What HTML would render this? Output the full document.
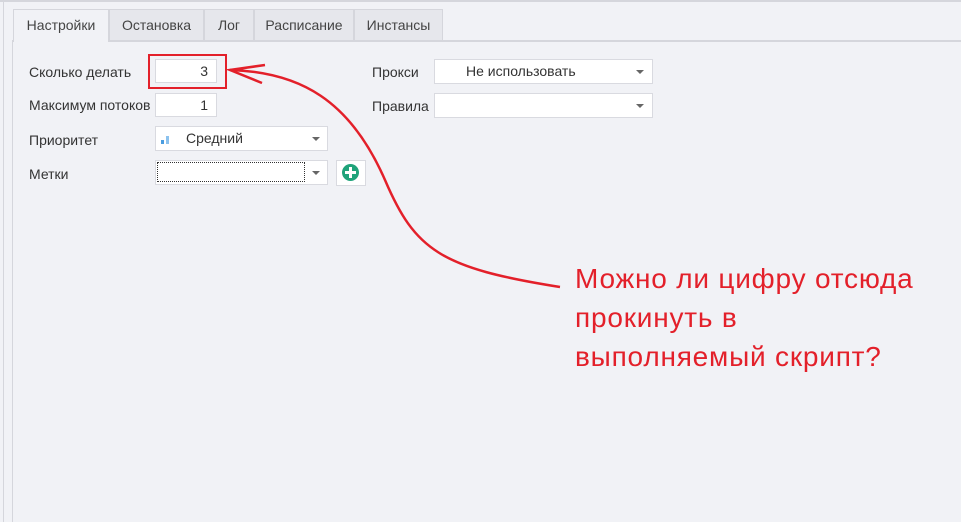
<!DOCTYPE html>
<html><head><meta charset="utf-8"><style>
body{margin:0;width:961px;height:522px;background:#f1f2f6;position:relative;overflow:hidden;font-family:"Liberation Sans",sans-serif;font-size:14px;color:#333}
.a{position:absolute}
.tab{position:absolute;top:9px;height:31px;line-height:31px;text-align:center;background:#e6e7ec;border:1px solid #d5d6dc;border-bottom:none;box-sizing:border-box;color:#444}
.in{position:absolute;background:#fff;border:1px solid #d9dae0;box-sizing:border-box}
.lbl{position:absolute;color:#333}
.dd{position:absolute;width:0;height:0;border-left:4px solid transparent;border-right:4px solid transparent;border-top:4px solid #666}
</style></head><body>
<div class="a" style="left:0;top:0;width:961px;height:2px;background:#d5d6dc"></div>
<div class="a" style="left:3px;top:2px;width:1px;height:520px;background:#d5d6dc"></div>
<div class="a" style="left:12px;top:41px;width:1px;height:481px;background:#d5d6dc"></div>
<div class="a" style="left:12px;top:40px;width:949px;height:2px;background:#d5d6dc"></div>
<div class="tab" style="left:13px;width:96px;background:#f1f2f6;height:33px;border-color:#d5d6dc">Настройки</div>
<div class="tab" style="left:109px;width:95px">Остановка</div>
<div class="tab" style="left:204px;width:50px">Лог</div>
<div class="tab" style="left:254px;width:100px">Расписание</div>
<div class="tab" style="left:354px;width:89px">Инстансы</div>

<div class="lbl" style="left:29px;top:64px">Сколько делать</div>
<div class="in" style="left:155px;top:59px;width:62px;height:24px;text-align:right;padding-right:8px;line-height:22px">3</div>
<div class="a" style="left:148px;top:54px;width:75px;height:31px;border:2px solid #e3202a"></div>
<div class="lbl" style="left:29px;top:97px">Максимум потоков</div>
<div class="in" style="left:155px;top:93px;width:62px;height:24px;text-align:right;padding-right:8px;line-height:22px">1</div>
<div class="lbl" style="left:29px;top:132px">Приоритет</div>
<div class="in" style="left:155px;top:126px;width:173px;height:25px;line-height:23px;padding-left:30px">Средний</div>
<div class="a" style="left:161px;top:140px;width:3px;height:4px;background:#4a9de0"></div>
<div class="a" style="left:166px;top:136px;width:3px;height:8px;background:#8cc2ee"></div>
<div class="dd" style="left:312px;top:137px"></div>
<div class="lbl" style="left:29px;top:166px">Метки</div>
<div class="in" style="left:155px;top:160px;width:173px;height:25px"></div>
<div class="a" style="left:157px;top:162px;width:148px;height:20px;border:1px dotted #333;box-sizing:border-box"></div>
<div class="dd" style="left:312px;top:171px"></div>
<div class="in" style="left:336px;top:160px;width:30px;height:26px"></div>
<div class="a" style="left:342px;top:164px;width:17px;height:17px;border-radius:50%;background:#1fa37a"></div>
<div class="a" style="left:349px;top:167px;width:3px;height:11px;background:#fff"></div>
<div class="a" style="left:345px;top:171px;width:11px;height:3px;background:#fff"></div>

<div class="lbl" style="left:372px;top:64px">Прокси</div>
<div class="in" style="left:434px;top:59px;width:219px;height:25px;line-height:23px;padding-left:31px">Не использовать</div>
<div class="dd" style="left:636px;top:70px"></div>
<div class="lbl" style="left:372px;top:98px">Правила</div>
<div class="in" style="left:434px;top:93px;width:219px;height:25px"></div>
<div class="dd" style="left:636px;top:104px"></div>

<svg class="a" style="left:0;top:0" width="961" height="522">
<path d="M230 70 C300 72 350 100 385 180 C415 250 440 268 560 287" fill="none" stroke="#e3202a" stroke-width="2.5"/>
<path d="M265 65 L230 70 L262 83" fill="none" stroke="#e3202a" stroke-width="2.5"/>
</svg>
<div class="a" style="left:575px;top:259px;font-size:28px;letter-spacing:0.8px;line-height:39px;color:#e3202a">Можно ли цифру отсюда<br>прокинуть в<br>выполняемый скрипт?</div>
</body></html>
